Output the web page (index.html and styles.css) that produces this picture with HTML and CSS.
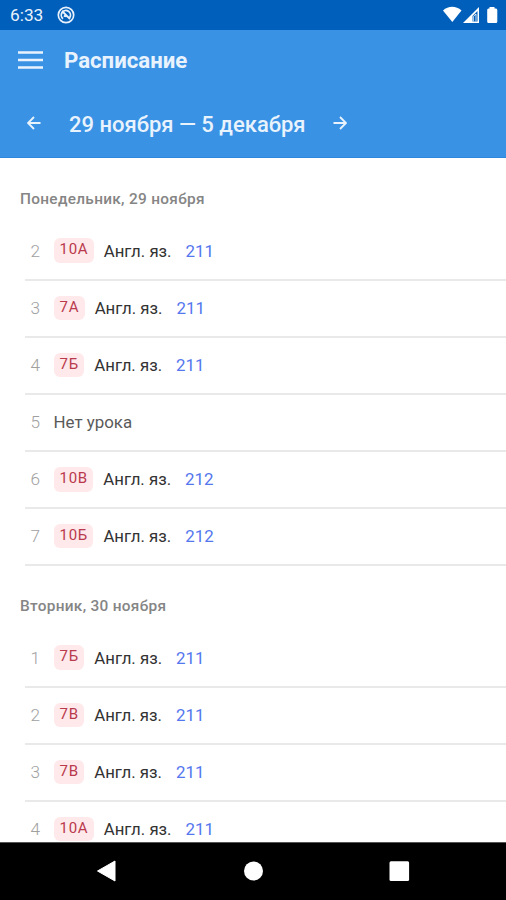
FILE: index.html
```html
<!DOCTYPE html>
<html lang="ru">
<head>
<meta charset="utf-8">
<title>Расписание</title>
<link rel="stylesheet" href="styles.css">
</head>
<body>
<div class="screen">
  <div class="status">
    <span class="clock">6:33</span>
    <svg class="app-dot" viewBox="0 0 18 18"><circle cx="9" cy="9" r="7.700" fill="none" stroke="currentColor" stroke-width="1.700"/><path d="M6 12.700A4.600 4.600 0 1 1 12.800 11.500M5 5 13 13M6.800 9.800 9.500 10.500" fill="none" stroke="currentColor" stroke-width="1.800"/></svg>
    <svg class="indicators" viewBox="0 0 56 18"><path d="M0 4.500C5.300-.4 13-.4 18.500 4.500L9.300 16Z" fill="currentColor"/><path d="M36 1V17H20Z" fill="currentColor"/><path d="M34.500 5V15.500H29.500V10Z" fill="#005fba"/><path d="M30.300 15.500V10.500L33 8V15.500" fill="none" stroke="currentColor" stroke-width=".8"/><path d="M46.500 1H51.500V2.500H53Q54.300 2.500 54.300 4V15.500Q54.300 17 53 17H45.500Q44.200 17 44.200 15.500V4Q44.200 2.500 45.500 2.500H46.500Z" fill="currentColor"/></svg>
  </div>
  <header class="appbar">
    <div class="title-row">
      <svg class="menu" viewBox="0 0 25 18"><path d="M0 1.500H25M0 9H25M0 16.500H25" stroke="currentColor" stroke-width="2.700"/></svg>
      <h1 class="title">Расписание</h1>
    </div>
    <div class="week-row">
      <svg class="arrow" viewBox="0 0 14 14"><path d="M13.500 7H1.500M7 1 1 7 7 13" fill="none" stroke="currentColor" stroke-width="1.800"/></svg>
      <span class="week">29 ноября — 5 декабря</span>
      <svg class="arrow" viewBox="0 0 14 14"><path d="M.5 7H12.500M7 1 13 7 7 13" fill="none" stroke="currentColor" stroke-width="1.800"/></svg>
    </div>
  </header>
  <main class="list">
    <section class="day">
      <h2 class="day-name">Понедельник, 29 ноября</h2>
      <div class="lesson"><span class="num">2</span><span class="group">10А</span><span class="subject">Англ. яз.</span><span class="room">211</span></div>
      <div class="lesson"><span class="num">3</span><span class="group">7А</span><span class="subject">Англ. яз.</span><span class="room">211</span></div>
      <div class="lesson"><span class="num">4</span><span class="group">7Б</span><span class="subject">Англ. яз.</span><span class="room">211</span></div>
      <div class="lesson"><span class="num">5</span><span class="none">Нет урока</span></div>
      <div class="lesson"><span class="num">6</span><span class="group">10В</span><span class="subject">Англ. яз.</span><span class="room">212</span></div>
      <div class="lesson"><span class="num">7</span><span class="group">10Б</span><span class="subject">Англ. яз.</span><span class="room">212</span></div>
    </section>
    <section class="day">
      <h2 class="day-name">Вторник, 30 ноября</h2>
      <div class="lesson"><span class="num">1</span><span class="group">7Б</span><span class="subject">Англ. яз.</span><span class="room">211</span></div>
      <div class="lesson"><span class="num">2</span><span class="group">7В</span><span class="subject">Англ. яз.</span><span class="room">211</span></div>
      <div class="lesson"><span class="num">3</span><span class="group">7В</span><span class="subject">Англ. яз.</span><span class="room">211</span></div>
      <div class="lesson"><span class="num">4</span><span class="group">10А</span><span class="subject">Англ. яз.</span><span class="room">211</span></div>
    </section>
  </main>
  <nav class="navbar">
    <svg class="nav-icon" viewBox="0 0 22 22"><path d="M19 1V21L1.500 11Z" fill="#fff" stroke="#fff" stroke-linejoin="round"/></svg>
    <svg class="nav-icon" viewBox="0 0 22 22"><circle cx="11.500" cy="11" r="9.500" fill="#fff"/></svg>
    <svg class="nav-icon" viewBox="0 0 22 22"><rect x="1.500" y="1.300" width="19.600" height="19.600" rx="1.500" fill="#fff"/></svg>
  </nav>
</div>
</body>
</html>
```

FILE: styles.css
```css
* { box-sizing: border-box; }
body { margin: 0; font-family: Roboto, "Noto Sans", sans-serif; background: #fff; }
.screen { width: 506px; height: 900px; display: flex; flex-direction: column; overflow: hidden; }
.status { height: 30px; flex: none; background: #005fba; color: #e9f2fc; display: flex; align-items: center; padding: 0 7px 0 10px; }
.clock { font-size: 17.300px; width: 47px; }
.app-dot { width: 18px; height: 18px; }
.indicators { width: 56px; height: 18px; margin-left: auto; color: #fff; }
.appbar { height: 127.500px; flex: none; background: #3a92e4; color: #e9f3fd; border-bottom: 1px solid #2f87dc; }
.title-row { height: 60px; display: flex; align-items: center; padding-left: 18px; }
.menu { width: 25px; height: 18px; margin-right: 21px; }
.title { margin: 0; font-size: 22.200px; font-weight: 700; line-height: 28px; }
.week-row { height: 65px; display: flex; align-items: center; padding-left: 27px; }
.week { width: 237px; margin: 5px 27px 0 28px; font-size: 22px; font-weight: 500; line-height: 28px; white-space: nowrap; }
.arrow { width: 14px; height: 14px; }
.list { flex: 1; min-height: 0; overflow: hidden; padding-top: 25.500px; }
.day { padding-left: 25px; padding-bottom: 24.500px; }
.day-name { margin: 0 0 8px -5px; height: 32.500px; line-height: 33px; font-size: 15.400px; font-weight: 500; letter-spacing: .3px; color: #858585; }
.lesson { height: 57.200px; border-bottom: 2px solid #e9e9ea; display: flex; align-items: center; padding: 0 0 1px 5px; font-size: 17.200px; line-height: 24px; white-space: nowrap; }
.lesson:last-child { height: 56.200px; }
.num { width: 23.500px; padding-left: .5px; color: #a0a0a0; font-weight: 300; }
.group { height: 24.500px; padding: 0 5.500px 0 6px; margin-right: 10px; border-radius: 6px; background: #ffe9eb; color: #b93a4d; font-size: 15px; line-height: 22.500px; letter-spacing: .7px; }
.subject { color: #333; margin-right: 14px; font-size: 16.800px; }
.room { color: #5577ee; font-size: 16.900px; }
.none { color: #5a5a5a; font-size: 16.900px; }
.navbar { height: 58.500px; flex: none; background: #000; border-top: 1px solid #555; display: flex; justify-content: center; align-items: center; gap: 124px; }
.nav-icon { width: 22px; height: 22px; }
```
